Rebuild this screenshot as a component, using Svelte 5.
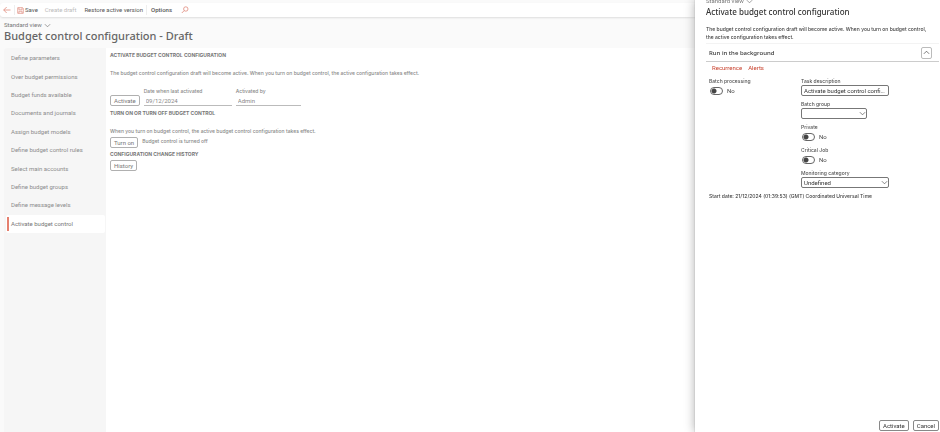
<script lang="ts">
  const steps = [
    "Define parameters",
    "Over budget permissions",
    "Budget funds available",
    "Documents and journals",
    "Assign budget models",
    "Define budget control rules",
    "Select main accounts",
    "Define budget groups",
    "Define message levels",
    "Activate budget control",
  ];

  let current = $state("Activate budget control");
  let expanded = $state(true);
  let batch = $state(false);
  let isPrivate = $state(false);
  let critical = $state(false);
  let description = $state("Activate budget control configuration");
  let group = $state("");
  let category = $state("Undefined");
</script>

{#snippet chevron()}
  <svg class="chev" viewBox="0 0 8 8" aria-hidden="true"><path d="M1 2.5 4 5.5 7 2.5" /></svg>
{/snippet}

<div class="page">
  <div class="toolbar">
    <button type="button" class="tool back" aria-label="Back">
      <svg viewBox="0 0 8 8"><path d="M7.5 4H.7M3.7 1 .7 4l3 3" /></svg>
    </button>
    <span class="sep"></span>
    <button type="button" class="tool save">
      <svg viewBox="0 0 8 8"><path d="M.8.8h5.6l.8.8v5.6H.8zM2.2.8v2.4h3.6V.8M2.2 7.2V4.9h3.6v2.3" /></svg>
      Save
    </button>
    <button type="button" class="tool draft" disabled>Create draft</button>
    <button type="button" class="tool restore">Restore active version</button>
    <span class="sep"></span>
    <button type="button" class="tool options">Options</button>
    <button type="button" class="tool find" aria-label="Search">
      <svg viewBox="0 0 8 8"><circle cx="4.8" cy="3" r="2.2" /><path d="M3.2 4.6.8 7" /></svg>
    </button>
  </div>

  <header class="head">
    <button type="button" class="view">Standard view {@render chevron()}</button>
    <h1>Budget control configuration - Draft</h1>
  </header>

  <div class="body">
    <nav>
      {#each steps as step}
        <button type="button" class:active={current === step} onclick={() => (current = step)}>
          {step}
        </button>
      {/each}
    </nav>

    <main>
      <h2>Activate budget control configuration</h2>
      <p>
        The budget control configuration draft will become active. When you turn on budget control,
        the active configuration takes effect.
      </p>
      <div class="row fields">
        <button type="button" class="btn">Activate</button>
        <label class="ro date">
          Date when last activated
          <input type="text" value="09/12/2024" readonly />
        </label>
        <label class="ro by">
          Activated by
          <input type="text" value="Admin" readonly />
        </label>
      </div>

      <h2>Turn on or turn off budget control</h2>
      <p>When you turn on budget control, the active budget control configuration takes effect.</p>
      <div class="row">
        <button type="button" class="btn">Turn on</button>
        <span class="state">Budget control is turned off</span>
      </div>

      <h2>Configuration change history</h2>
      <div class="row">
        <button type="button" class="btn">History</button>
      </div>
    </main>
  </div>
</div>

{#snippet toggle(name: string, value: boolean, set: (v: boolean) => void)}
  <div class="field">
    <span class="name">{name}</span>
    <label class="toggle">
      <input
        type="checkbox"
        role="switch"
        aria-label={name}
        checked={value}
        onchange={(e) => set(e.currentTarget.checked)}
      />
      {value ? "Yes" : "No"}
    </label>
  </div>
{/snippet}

<div class="dialog" role="dialog" aria-labelledby="dialog-title">
  <button type="button" class="view">Standard view {@render chevron()}</button>
  <h1 id="dialog-title">Activate budget control configuration</h1>
  <p>
    The budget control configuration draft will become active. When you turn on budget control, the
    active configuration takes effect.
  </p>

  <section>
    <div class="sechead">
      <h2>Run in the background</h2>
      <button
        type="button"
        class="collapse"
        aria-label="Collapse"
        aria-expanded={expanded}
        onclick={() => (expanded = !expanded)}
      >
        <span class:flip={expanded}>{@render chevron()}</span>
      </button>
    </div>

    {#if expanded}
      <div class="links">
        <a href="#recurrence">Recurrence</a>
        <a href="#alerts">Alerts</a>
      </div>
      <div class="cols">
        <div class="col">
          {@render toggle("Batch processing", batch, (v) => (batch = v))}
        </div>
        <div class="col">
          <div class="field">
            <label for="description">Task description</label>
            <input id="description" class="box wide" type="text" bind:value={description} />
          </div>
          <div class="field">
            <label for="group">Batch group</label>
            <span class="pick">
              <select id="group" class="box" bind:value={group}>
                <option value=""></option>
              </select>
              {@render chevron()}
            </span>
          </div>
          {@render toggle("Private", isPrivate, (v) => (isPrivate = v))}
          {@render toggle("Critical Job", critical, (v) => (critical = v))}
          <div class="field">
            <label for="category">Monitoring category</label>
            <span class="pick">
              <select id="category" class="box wide" bind:value={category}>
                <option>Undefined</option>
              </select>
              {@render chevron()}
            </span>
          </div>
        </div>
      </div>
      <p class="start">Start date: 21/12/2024 (01:39:53) (GMT) Coordinated Universal Time</p>
    {/if}
  </section>

  <footer>
    <button type="button" class="btn">Activate</button>
    <button type="button" class="btn">Cancel</button>
  </footer>
</div>

<style>
  :global(body) {
    --ui: Roboto, "Open Sans", sans-serif;
    --title: "Noto Sans", "Open Sans", sans-serif;
    background: #fafafa;
    font-family: Inter, "Open Sans", sans-serif;
    font-size: 5px;
    font-weight: 500;
    line-height: 8px;
    color: #444;
  }
  h1,
  h2,
  p {
    margin: 0;
  }
  button,
  input,
  select {
    font: inherit;
    font-family: var(--ui);
    font-size: 6px;
    font-weight: 400;
    color: inherit;
    box-sizing: border-box;
    margin: 0;
  }
  button {
    padding: 0;
    border: 0;
    background: none;
    white-space: nowrap;
    cursor: pointer;
  }
  svg {
    width: 8px;
    height: 8px;
    fill: none;
    stroke: currentColor;
    stroke-width: 0.8;
  }
  .chev {
    width: 7px;
    height: 7px;
  }
  .page {
    display: flex;
    flex-direction: column;
    min-height: 100vh;
    color: #777;
  }
  .toolbar {
    display: flex;
    align-items: center;
    height: 14px;
    margin-top: 3px;
    padding-left: 3px;
    background: #fff;
    border-radius: 3px;
    box-shadow: 0 1px 2px #ddd;
  }
  .tool {
    display: flex;
    align-items: center;
    gap: 1px;
    color: #555;
  }
  .tool svg {
    color: #e08a7c;
  }
  .save svg {
    width: 7px;
    height: 7px;
  }
  .sep {
    width: 1px;
    height: 10px;
    background: #eee;
  }
  .back {
    margin-right: 3px;
  }
  .save {
    margin: 0 7px 0 2px;
  }
  .draft {
    margin-right: 8px;
    color: #bbb;
  }
  .restore {
    margin-right: 3px;
  }
  .options {
    margin: 0 9px 0 4px;
    font-weight: 500;
  }
  .head {
    padding: 4px 4px 6px;
  }
  .view {
    display: flex;
    align-items: center;
    gap: 2px;
  }
  .head h1 {
    margin-top: 1px;
    font-family: var(--title);
    font-size: 11px;
    line-height: 12px;
    font-weight: 500;
    color: #666;
  }
  .body {
    flex: 1;
    display: flex;
    margin-left: 4px;
    border-radius: 4px 0 0 0;
    overflow: hidden;
    background: #f6f6f6;
  }
  nav {
    display: grid;
    grid-auto-rows: 1fr;
    width: 102px;
    height: 185px;
    padding: 1px 1px 0 2px;
    box-sizing: border-box;
    flex-shrink: 0;
  }
  nav button {
    display: flex;
    align-items: center;
    gap: 2px;
    padding: 0 0 0 1px;
    color: #8c8c8c;
    border-radius: 2px;
  }
  nav button::before {
    content: "";
    width: 2px;
    height: 14px;
  }
  nav button.active {
    background: #fff;
    color: #777;
  }
  nav button.active::before {
    background: #e5806f;
  }
  main {
    flex: 1;
    padding: 3px 4px;
    background: #fff;
  }
  main h2 {
    font-size: 5px;
    line-height: 8px;
    font-weight: 700;
    text-transform: uppercase;
    color: #777;
  }
  main p {
    margin-top: 10px;
    color: #888;
  }
  .row {
    display: flex;
    align-items: flex-start;
    gap: 4px;
    margin: 2px 0;
  }
  .fields {
    align-items: flex-end;
    margin: 10px 0 3px;
  }
  .btn {
    height: 11px;
    padding: 0 3px;
    line-height: 8px;
    border: 1px solid #b0b0b0;
    border-radius: 2px;
    background: #fff;
  }
  .ro {
    display: flex;
    flex-direction: column;
    color: #888;
  }
  .ro input {
    height: 11px;
    width: 100%;
    padding: 0 2px;
    border: 0;
    border-bottom: 1px solid #bbb;
    background: none;
    outline: 0;
  }
  .date {
    width: 88px;
  }
  .by {
    width: 65px;
  }
  .state {
    color: #888;
  }

  .dialog {
    position: fixed;
    top: 0;
    right: 0;
    bottom: 0;
    width: 245px;
    display: flex;
    flex-direction: column;
    align-items: stretch;
    box-sizing: border-box;
    padding: 0 1px 1px 11px;
    background: #fff;
    box-shadow: 0 0 10px #aaa, 0 0 1px #999;
    overflow: hidden;
  }
  .dialog > .view {
    flex-shrink: 0;
    margin-top: -3px;
    color: #777;
  }
  .dialog h1 {
    margin-top: 2px;
    font-family: var(--title);
    font-size: 8px;
    line-height: 10px;
    font-weight: 500;
    color: #333;
  }
  .dialog > p {
    margin: 8px 0 2px;
    padding-right: 6px;
  }
  .sechead {
    display: flex;
    align-items: center;
    justify-content: space-between;
    height: 17px;
    padding: 0 7px 0 3px;
    border-top: 1px solid #f3f3f3;
    border-bottom: 1px solid #ccc;
  }
  .sechead h2 {
    font-family: var(--title);
    font-size: 6px;
    font-weight: 500;
    color: #333;
  }
  .collapse {
    display: grid;
    place-items: center;
    width: 11px;
    height: 12px;
    border: 1px solid #bbb;
    border-radius: 2px;
  }
  .collapse span {
    display: grid;
  }
  .flip {
    transform: rotate(180deg);
  }
  .links {
    display: flex;
    gap: 6px;
    padding: 2px 6px 5px;
  }
  .links a {
    font-family: var(--ui);
    font-size: 6px;
    font-weight: 400;
    color: #c8402c;
    text-decoration: none;
  }
  .cols {
    display: flex;
    padding: 0 3px;
  }
  .col {
    flex: 1;
    display: flex;
    flex-direction: column;
    gap: 4px;
  }
  .col:first-child {
    flex: 0 0 92px;
  }
  .field {
    display: flex;
    flex-direction: column;
    align-items: flex-start;
    color: #555;
  }
  .toggle {
    display: flex;
    align-items: center;
    gap: 4px;
    height: 11px;
    padding-left: 1px;
    font-family: var(--ui);
    font-size: 6px;
    font-weight: 400;
    color: #444;
  }
  .toggle input {
    appearance: none;
    width: 13px;
    height: 8px;
    border: 1px solid #666;
    border-radius: 4px;
    background: radial-gradient(circle at 3px 50%, #444 2px, transparent 3px);
  }
  .toggle input:checked {
    background: radial-gradient(circle at 8px 50%, #444 2px, transparent 3px);
  }
  .box {
    appearance: none;
    width: 66px;
    height: 11px;
    padding: 0 2px;
    line-height: 8px;
    color: #333;
    border: 1px solid #777;
    border-radius: 2px;
    background: #fff;
    text-overflow: ellipsis;
  }
  .wide {
    width: 88px;
  }
  .pick {
    display: grid;
    align-items: center;
  }
  .pick > .box,
  .pick > :global(svg) {
    grid-area: 1 / 1;
  }
  .pick > :global(svg) {
    justify-self: end;
    margin-right: 1px;
    pointer-events: none;
  }
  .start {
    padding: 4px 3px;
  }
  footer {
    display: flex;
    justify-content: flex-end;
    gap: 4px;
    margin-top: auto;
  }
  footer .btn {
    color: #333;
    border-color: #888;
  }
</style>
